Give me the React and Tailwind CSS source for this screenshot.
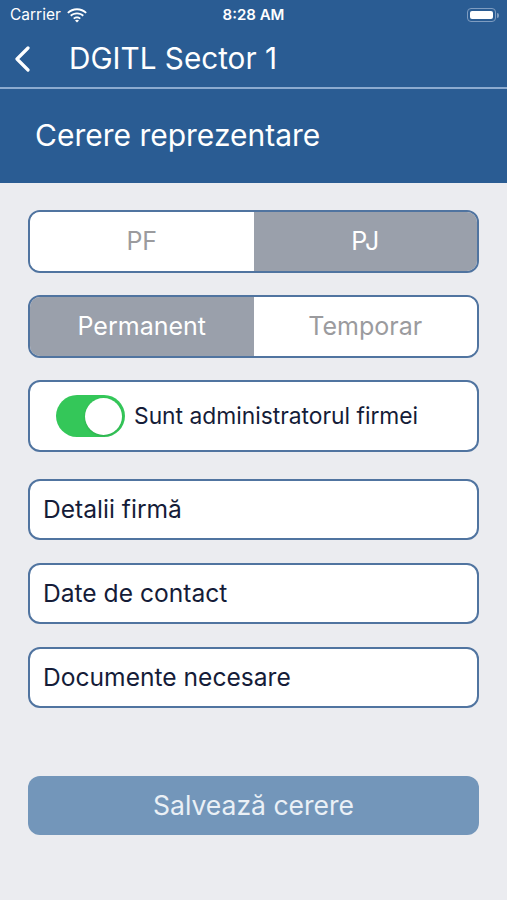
import React from "react";

const font = { fontFamily: "Inter, 'Liberation Sans', sans-serif" };

function Wifi() {
  return (
    <svg width="20" height="15" viewBox="0 0 20 15" fill="white">
      <path d="M10 2.2c3.3 0 6.3 1.3 8.5 3.4l1.3-1.4C17.2 1.7 13.8.2 10 .2S2.8 1.7.2 4.2l1.3 1.4C3.7 3.5 6.7 2.2 10 2.2z" />
      <path d="M10 6.3c2.1 0 4.1.8 5.6 2.2l1.3-1.4C15.1 5.4 12.7 4.4 10 4.4S4.9 5.4 3.1 7.1l1.3 1.4C5.9 7.1 7.9 6.3 10 6.3z" />
      <path d="M10 10.3c1 0 1.9.4 2.6 1l1.3-1.4c-1-.9-2.4-1.5-3.9-1.5s-2.9.6-3.9 1.5l1.3 1.4c.7-.6 1.6-1 2.6-1z" />
      <path d="M10 14.6l2-2.1c-.5-.5-1.2-.8-2-.8s-1.5.3-2 .8l2 2.1z" />
    </svg>
  );
}

function Row({ label }) {
  return (
    <div className="h-[61px] rounded-[12px] border-2 border-[#5074a0] bg-white flex items-center pl-[13px]">
      <span className="text-[24.6px] text-[#151c38]">{label}</span>
    </div>
  );
}

export default function App() {
  return (
    <div style={font} className="w-[507px] h-[900px] bg-[#ebecf0] flex flex-col">
      <div className="bg-[#2a5c93] text-white">
        <div className="h-[30px] relative flex items-center pl-[10px] pr-[8px]">
          <span className="text-[15.5px] mr-[6px]">Carrier</span>
          <Wifi />
          <span className="absolute left-0 right-0 text-center text-[15px] font-semibold">8:28 AM</span>
          <div className="ml-auto flex items-center">
            <div className="w-[29px] h-[14px] rounded-[4px] border border-[#7e9cc0] p-[2px]">
              <div className="w-full h-full rounded-[2px] bg-white" />
            </div>
            <div className="w-[2px] h-[5px] bg-[#7e9cc0] rounded-r-sm ml-[1px]" />
          </div>
        </div>
        <div className="h-[57px] flex items-center">
          <svg width="18" height="26" viewBox="0 0 18 26" className="ml-[13px] mr-[38px]" fill="none" stroke="white" strokeWidth="3.2" strokeLinecap="round" strokeLinejoin="round">
            <path d="M15 2L4 13l11 11" />
          </svg>
          <span className="text-[29.7px] leading-none">DGITL Sector 1</span>
        </div>
        <div className="h-[2px] bg-[#8cabd0]" />
        <div className="h-[94px] flex items-center pl-[35px] pb-[2px]">
          <span className="text-[30px] leading-none">Cerere reprezentare</span>
        </div>
      </div>

      <div className="px-[28px] pt-[27px] flex flex-col">
        <div className="h-[63px] rounded-[12px] border-2 border-[#5074a0] overflow-hidden flex">
          <div className="flex-1 bg-white flex items-center justify-center text-[25px] text-[#9b9b9e]">PF</div>
          <div className="flex-1 bg-[#9aa0ab] flex items-center justify-center text-[25px] text-white">PJ</div>
        </div>
        <div className="h-[63px] mt-[22px] rounded-[12px] border-2 border-[#5074a0] overflow-hidden flex">
          <div className="flex-1 bg-[#9aa0ab] flex items-center justify-center text-[25px] text-white">Permanent</div>
          <div className="flex-1 bg-white flex items-center justify-center text-[25px] text-[#9b9b9e]">Temporar</div>
        </div>
        <div className="h-[72px] mt-[22px] rounded-[12px] border-2 border-[#5074a0] bg-white flex items-center pl-[26px]">
          <div className="w-[69px] h-[42px] rounded-full bg-[#34c759] flex items-center justify-end pr-[3px]">
            <div className="w-[37px] h-[37px] rounded-full bg-white shadow" />
          </div>
          <span className="ml-[9px] text-[22.8px] text-[#151c38]">Sunt administratorul firmei</span>
        </div>
        <div className="flex flex-col gap-[23px] mt-[27px]">
          <Row label="Detalii firmă" />
          <Row label="Date de contact" />
          <Row label="Documente necesare" />
        </div>
        <div className="h-[59px] mt-[68px] rounded-[12px] bg-[#7396ba] flex items-center justify-center text-[26.5px] text-[#eaf0f6]">
          Salvează cerere
        </div>
      </div>
    </div>
  );
}
